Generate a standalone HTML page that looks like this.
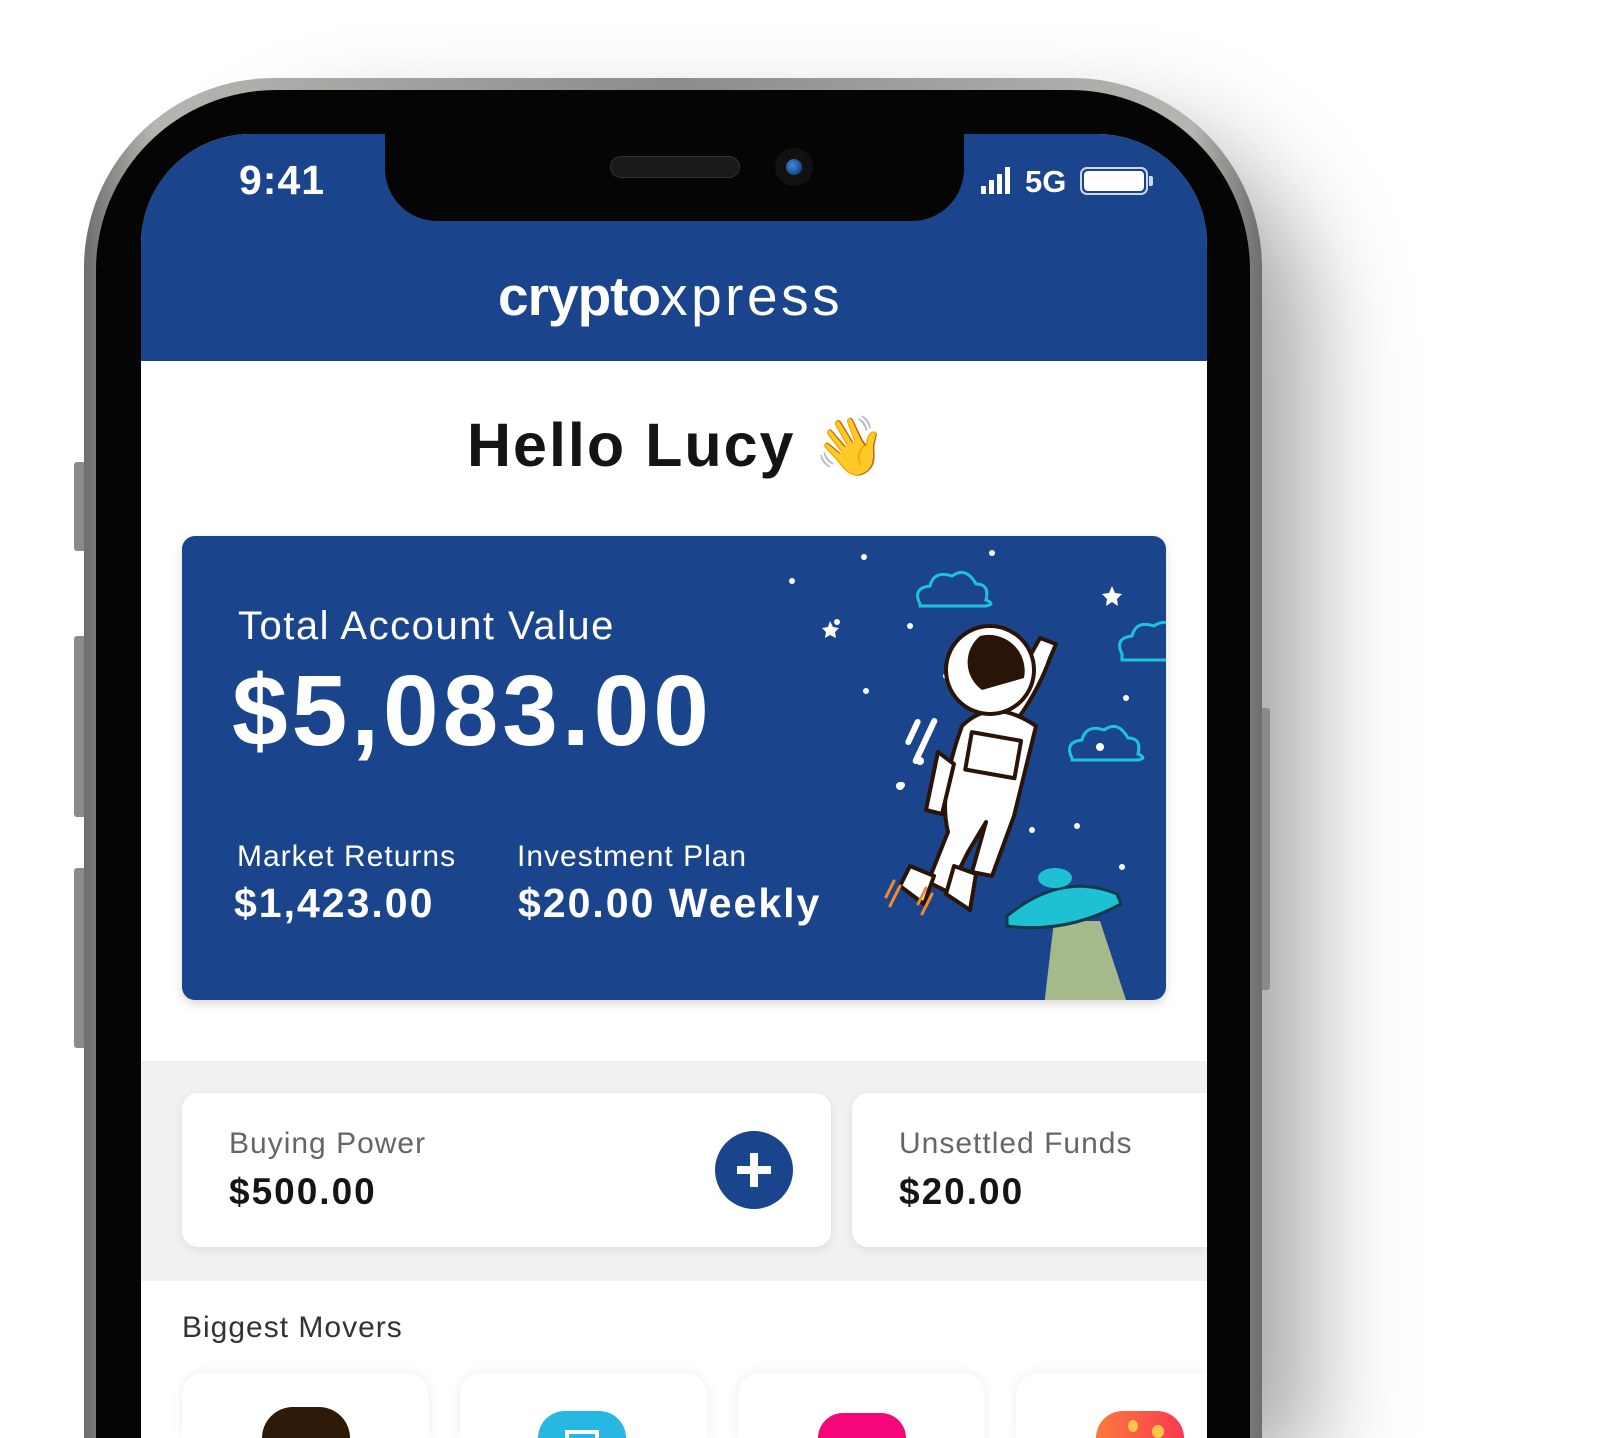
<!DOCTYPE html>
<html><head><meta charset="utf-8"><style>
*{margin:0;padding:0;box-sizing:border-box}
html,body{width:1608px;height:1438px;overflow:hidden;background:#fff}
#root{position:relative;width:1608px;height:1438px;overflow:hidden;font-family:"Liberation Sans",sans-serif}
.abs{position:absolute}
.t{position:absolute;white-space:nowrap}
</style></head><body><div id="root">
<div class="abs" style="left:140px;top:100px;width:1120px;height:1338px;border-radius:200px 200px 0 0;box-shadow:50px 30px 100px rgba(0,0,0,0.35)"></div>
<div class="abs" style="left:74px;top:462px;width:12px;height:89px;background:#8a8a88;border-radius:3px"></div>
<div class="abs" style="left:74px;top:636px;width:12px;height:181px;background:#8a8a88;border-radius:3px"></div>
<div class="abs" style="left:74px;top:868px;width:12px;height:180px;background:#8a8a88;border-radius:3px"></div>
<div class="abs" style="left:1258px;top:708px;width:12px;height:282px;background:#8a8a88;border-radius:3px"></div>
<div class="abs" style="left:84px;top:78px;width:1178px;height:1360px;border-radius:190px 190px 0 0;background:linear-gradient(90deg,#6e6e6c,#b5b5b2 6%,#8c8c8a 50%,#b5b5b2 94%,#6e6e6c)"></div>
<div class="abs" style="left:96px;top:90px;width:1154px;height:1348px;border-radius:180px 180px 0 0;background:#050505"></div>
<div class="abs" style="left:141px;top:134px;width:1066px;height:1304px;border-radius:110px 110px 0 0;background:#fff;overflow:hidden">
  <div class="abs" style="left:0;top:0;width:1066px;height:227px;background:#1a448c"></div>
  <div class="abs" style="left:0;top:927px;width:1066px;height:220px;background:#f1f1f1"></div>
</div>
<div class="abs" style="left:385px;top:120px;width:579px;height:101px;background:#050505;border-radius:0 0 52px 52px"></div>
<div class="abs" style="left:610px;top:156px;width:130px;height:22px;border-radius:11px;background:#1a1a1a;border:1px solid #333"></div>
<div class="abs" style="left:775px;top:148px;width:38px;height:38px;border-radius:50%;background:#111"></div>
<div class="abs" style="left:786px;top:159px;width:16px;height:16px;border-radius:50%;background:radial-gradient(circle at 40% 40%,#3a8be0,#0a2a60)"></div>
<div class="t" style="left:239px;top:157px;font-size:41px;font-weight:bold;color:#fff;letter-spacing:1px">9:41</div>
<div class="abs" style="left:981px;top:186px;width:5px;height:8px;background:#fff"></div>
<div class="abs" style="left:989px;top:180px;width:5px;height:14px;background:#fff"></div>
<div class="abs" style="left:997px;top:174px;width:5px;height:20px;background:#fff"></div>
<div class="abs" style="left:1005px;top:167px;width:5px;height:27px;background:#fff"></div>
<div class="t" style="left:1025px;top:164px;font-size:31px;font-weight:bold;color:#fff">5G</div>
<div class="abs" style="left:1080px;top:167px;width:68px;height:28px;border:2px solid #cfd8ea;border-radius:7px;padding:2px"><div style="width:100%;height:100%;background:#fff;border-radius:4px"></div></div>
<div class="abs" style="left:1149px;top:176px;width:4px;height:10px;background:#cfd8ea;border-radius:0 2px 2px 0"></div>
<div class="t" style="left:498px;top:264px;font-size:55px;color:#fff"><b style="letter-spacing:-1px">crypto</b><span style="font-weight:normal;letter-spacing:3.5px">xpress</span></div>
<div class="t" style="left:467px;top:410px;font-size:61px;font-weight:bold;color:#141414;letter-spacing:2px">Hello Lucy <span style="font-family:'Noto Color Emoji','DejaVu Sans',sans-serif;font-size:58px;letter-spacing:0">👋</span></div>
<div class="abs" style="left:182px;top:536px;width:984px;height:464px;border-radius:13px;background:#1a448c;box-shadow:0 4px 10px rgba(0,0,0,0.15);overflow:hidden">
<svg width="984" height="464" style="position:absolute;left:0;top:0">
 <g fill="#fff">
  <circle cx="610" cy="45" r="3"/><circle cx="682" cy="21" r="3"/><circle cx="810" cy="17" r="3"/><circle cx="655" cy="86" r="3"/><circle cx="728" cy="90" r="3"/><circle cx="684" cy="155" r="3"/><circle cx="764" cy="140" r="3"/><circle cx="944" cy="162" r="3"/><circle cx="918" cy="211" r="4"/><circle cx="720" cy="249" r="3"/><circle cx="850" cy="294" r="3"/><circle cx="895" cy="290" r="3"/><circle cx="940" cy="331" r="3"/>
  <circle cx="718" cy="250" r="4"/><circle cx="738" cy="225" r="4"/>
  <path d="M930 50 l3 7 7 1 -5 5 1 7 -6 -4 -6 4 1 -7 -5 -5 7 -1z"/>
  <path d="M648 85 l3 6 6 1 -4 4 1 6 -6 -3 -5 3 1 -6 -4 -4 6 -1z"/>
  <rect x="728" y="182" width="6" height="28" rx="3" transform="rotate(25 731 196)"/>
  <rect x="740" y="180" width="6" height="50" rx="3" transform="rotate(25 743 205)"/>
 </g>
 <g fill="none" stroke="#1fc3d8" stroke-width="3">
  <path d="M738 68 q-8 -16 10 -18 q4 -16 22 -10 q14 -10 24 8 q14 0 10 16 q10 4 0 6 h-66z"/>
  <path d="M940 118 q-8 -16 10 -18 q4 -16 22 -10 q14 -10 24 8 v26 h-56z"/>
  <path d="M890 222 q-8 -16 10 -18 q4 -16 22 -10 q14 -10 24 8 q14 0 10 16 q10 4 0 6 h-66z"/>
 </g>
 <g stroke="#2a1408" stroke-width="4" fill="#fff" stroke-linejoin="round">
  <path d="M848 120 l10 -18 l16 6 l-6 14 q-12 34 -36 66 l-22 -14z"/>
  <path d="M780 190 q30 -30 74 0 l-22 90 l-22 60 l-20 -4 l14 -50 l-18 30 l-20 40 l-20 -10 l20 -50 q-10 -40 14 -106z"/>
  <path d="M756 216 l-12 58 l16 4 l12 -50z"/>
  <rect x="786" y="200" width="50" height="38" transform="rotate(10 810 220)"/>
  <path d="M728 330 l24 10 l-10 28 l-24 -18z"/>
  <path d="M772 330 l22 8 l-6 36 l-24 -16z"/>
  <circle cx="808" cy="134" r="44"/>
 </g>
 <path d="M798 100 a36 36 0 0 1 44 42 l-42 12 a34 34 0 0 1 -2 -54z" fill="#2a1408"/>
 <g stroke="#f08a30" stroke-width="3" stroke-linecap="round">
  <path d="M712 345 l-8 16 M718 350 l-10 20 M744 352 l-8 16 M750 358 l-10 20"/>
 </g>
 <path d="M872 385 l-10 85 h84 l-28 -85z" fill="#a6b98a"/>
 <path d="M825 380 q55 -45 110 -22 l4 10 q-55 30 -114 22z" fill="#1ec0d4" stroke="#0e3a4a" stroke-width="3"/>
 <ellipse cx="873" cy="342" rx="17" ry="10" fill="#1ec0d4"/>
</svg>
 <div class="t" style="left:56px;top:68px;font-size:40px;color:#fff;letter-spacing:1.5px">Total Account Value</div>
 <div class="t" style="left:50px;top:118px;font-size:100px;font-weight:bold;color:#fff;letter-spacing:4px">$5,083.00</div>
 <div class="t" style="left:55px;top:304px;font-size:30px;color:#fff;letter-spacing:1px">Market Returns</div>
 <div class="t" style="left:52px;top:344px;font-size:41px;font-weight:bold;color:#fff;letter-spacing:2px">$1,423.00</div>
 <div class="t" style="left:335px;top:304px;font-size:30px;color:#fff;letter-spacing:1px">Investment Plan</div>
 <div class="t" style="left:336px;top:344px;font-size:41px;font-weight:bold;color:#fff;letter-spacing:2px">$20.00 Weekly</div>
</div>
<div class="abs" style="left:182px;top:1093px;width:649px;height:154px;border-radius:16px;background:#fff;box-shadow:0 3px 10px rgba(0,0,0,0.08)">
 <div class="t" style="left:47px;top:34px;font-size:30px;color:#666;letter-spacing:1px">Buying Power</div>
 <div class="t" style="left:47px;top:78px;font-size:37px;font-weight:bold;color:#151515;letter-spacing:2px">$500.00</div>
 <div class="abs" style="left:533px;top:38px;width:78px;height:78px;border-radius:50%;background:#1a448c"></div>
 <div class="abs" style="left:555px;top:73px;width:34px;height:8px;background:#fff"></div>
 <div class="abs" style="left:568px;top:60px;width:8px;height:34px;background:#fff"></div>
</div>
<div class="abs" style="left:852px;top:1093px;width:355px;height:154px;border-radius:16px 0 0 16px;background:#fff;box-shadow:0 3px 10px rgba(0,0,0,0.08)">
 <div class="t" style="left:47px;top:34px;font-size:30px;color:#666;letter-spacing:1px">Unsettled Funds</div>
 <div class="t" style="left:47px;top:78px;font-size:37px;font-weight:bold;color:#151515;letter-spacing:2px">$20.00</div>
</div>
<div class="t" style="left:182px;top:1311px;font-size:30px;color:#333;letter-spacing:1px">Biggest Movers</div>
<div class="abs" style="left:182px;top:1373px;width:247px;height:65px;border-radius:22px 22px 0 0;background:#fff;box-shadow:0 0 12px rgba(0,0,0,0.08)"></div>
<div class="abs" style="left:460px;top:1373px;width:247px;height:65px;border-radius:22px 22px 0 0;background:#fff;box-shadow:0 0 12px rgba(0,0,0,0.08)"></div>
<div class="abs" style="left:738px;top:1373px;width:247px;height:65px;border-radius:22px 22px 0 0;background:#fff;box-shadow:0 0 12px rgba(0,0,0,0.08)"></div>
<div class="abs" style="left:1016px;top:1373px;width:191px;height:65px;border-radius:22px 0 0 0;background:#fff;box-shadow:0 0 12px rgba(0,0,0,0.08)"></div>
<div class="abs" style="left:262px;top:1407px;width:88px;height:31px;border-radius:44px 44px 0 0;background:#2e1a08"></div>
<div class="abs" style="left:538px;top:1411px;width:88px;height:27px;border-radius:44px 44px 0 0;background:#27b7e3"></div>
<div class="abs" style="left:565px;top:1430px;width:34px;height:8px;border:4px solid #fff;border-bottom:none"></div>
<div class="abs" style="left:818px;top:1413px;width:88px;height:25px;border-radius:44px 44px 0 0;background:#f5077a"></div>
<div class="abs" style="left:1096px;top:1411px;width:88px;height:27px;border-radius:44px 44px 0 0;background:linear-gradient(90deg,#fb7a3c,#fa3a50)"></div>
<div class="abs" style="left:1128px;top:1420px;width:10px;height:12px;border-radius:50%;background:#f8c84a"></div>
<div class="abs" style="left:1152px;top:1425px;width:12px;height:13px;border-radius:50%;background:#f8c84a"></div>
</div></body></html>
